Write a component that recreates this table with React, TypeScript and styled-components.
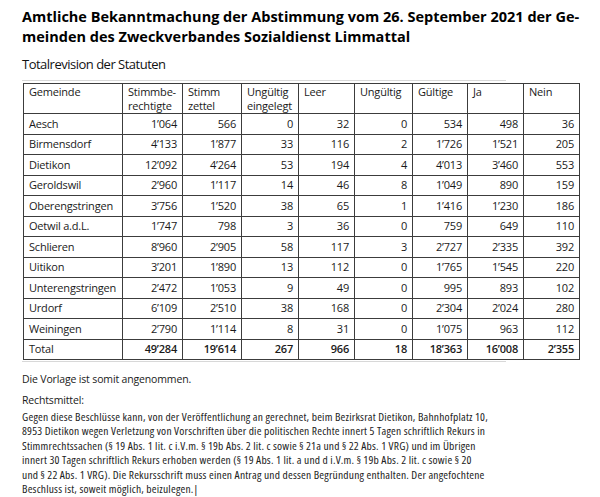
import styled, { createGlobalStyle } from "styled-components";

const GlobalStyle = createGlobalStyle`
  html, body {
    margin: 0;
    padding: 0;
    background: #ffffff;
  }
  body {
    font-family: "Open Sans", "Noto Sans", sans-serif;
    color: #1a1a1a;
  }
`;

interface Row {
  name: string;
  values: string[];
}

const columns = [
  "Gemeinde",
  "Stimmbe-\nrechtigte",
  "Stimm\nzettel",
  "Ungültig\neingelegt",
  "Leer",
  "Ungültig",
  "Gültige",
  "Ja",
  "Nein",
];

const widths = [99, 60, 59, 57, 56, 58, 55, 56, 56];

const rows: Row[] = [
  { name: "Aesch", values: ["1’064", "566", "0", "32", "0", "534", "498", "36"] },
  { name: "Birmensdorf", values: ["4’133", "1’877", "33", "116", "2", "1’726", "1’521", "205"] },
  { name: "Dietikon", values: ["12’092", "4’264", "53", "194", "4", "4’013", "3’460", "553"] },
  { name: "Geroldswil", values: ["2’960", "1’117", "14", "46", "8", "1’049", "890", "159"] },
  { name: "Oberengstringen", values: ["3’756", "1’520", "38", "65", "1", "1’416", "1’230", "186"] },
  { name: "Oetwil a.d.L.", values: ["1’747", "798", "3", "36", "0", "759", "649", "110"] },
  { name: "Schlieren", values: ["8’960", "2’905", "58", "117", "3", "2’727", "2’335", "392"] },
  { name: "Uitikon", values: ["3’201", "1’890", "13", "112", "0", "1’765", "1’545", "220"] },
  { name: "Unterengstringen", values: ["2’472", "1’053", "9", "49", "0", "995", "893", "102"] },
  { name: "Urdorf", values: ["6’109", "2’510", "38", "168", "0", "2’304", "2’024", "280"] },
  { name: "Weiningen", values: ["2’790", "1’114", "8", "31", "0", "1’075", "963", "112"] },
];

const total: Row = {
  name: "Total",
  values: ["49’284", "19’614", "267", "966", "18", "18’363", "16’008", "2’355"],
};

export default function App() {
  return (
    <Page>
      <GlobalStyle />
      <Title>
        Amtliche Bekanntmachung der Abstimmung vom 26. September 2021 der Ge-
        <br />
        meinden des Zweckverbandes Sozialdienst Limmattal
      </Title>
      <Subtitle>Totalrevision der Statuten</Subtitle>
      <Rule $top={7} />
      <Table>
        <colgroup>
          {widths.map((w, i) => (
            <col key={i} style={{ width: w }} />
          ))}
        </colgroup>
        <thead>
          <tr>
            {columns.map((c) => (
              <HeadCell key={c}>{c}</HeadCell>
            ))}
          </tr>
        </thead>
        <tbody>
          {rows.map((r) => (
            <tr key={r.name}>
              <NameCell>{r.name}</NameCell>
              {r.values.map((v, i) => (
                <NumCell key={i}>{v}</NumCell>
              ))}
            </tr>
          ))}
          <tr>
            <NameCell>{total.name}</NameCell>
            {total.values.map((v, i) => (
              <NumCell key={i} $bold>
                {v}
              </NumCell>
            ))}
          </tr>
        </tbody>
      </Table>
      <Rule $top={1} />
      <Text $top={10}>Die Vorlage ist somit angenommen.</Text>
      <Text $top={7}>Rechtsmittel:</Text>
      <Paragraph>
        Gegen diese Beschlüsse kann, von der Veröffentlichung an gerechnet, beim Bezirksrat Dietikon, Bahnhofplatz 10,
        <br />
        8953 Dietikon wegen Verletzung von Vorschriften über die politischen Rechte innert 5 Tagen schriftlich Rekurs in
        <br />
        Stimmrechtssachen (§ 19 Abs. 1 lit. c i.V.m. § 19b Abs. 2 lit. c sowie § 21a und § 22 Abs. 1 VRG) und im Übrigen
        <br />
        innert 30 Tagen schriftlich Rekurs erhoben werden (§ 19 Abs. 1 lit. a und d i.V.m. § 19b Abs. 2 lit. c sowie § 20
        <br />
        und § 22 Abs. 1 VRG). Die Rekursschrift muss einen Antrag und dessen Begründung enthalten. Der angefochtene
        <br />
        Beschluss ist, soweit möglich, beizulegen.|
      </Paragraph>
    </Page>
  );
}

const Page = styled.div`
  width: 600px;
  height: 497px;
  box-sizing: border-box;
  padding: 7px 0 0 22px;
  overflow: hidden;
`;

const Title = styled.h1`
  margin: 0;
  font-size: 14.5px;
  line-height: 19.5px;
  font-weight: 700;
  color: #000;
  white-space: nowrap;
`;

const Subtitle = styled.h2`
  margin: 9px 0 0;
  font-size: 13px;
  line-height: 18px;
  font-weight: 400;
  letter-spacing: -0.5px;
  color: #111;
`;

const Rule = styled.div<{ $top: number }>`
  width: 484px;
  height: 1px;
  background: #d8d8d8;
  margin: ${({ $top }) => $top}px 0 0;
`;

const Table = styled.table`
  border-collapse: collapse;
  table-layout: fixed;
  width: 556px;
  margin: 2px 0 0 1px;
  font-size: 11px;
  letter-spacing: -0.2px;
  color: #1a1a1a;
`;

const HeadCell = styled.th`
  border: 1px solid #3c3c3c;
  height: 28px;
  padding: 1px 5px 0;
  text-align: left;
  vertical-align: top;
  font-weight: 400;
  line-height: 13.5px;
  white-space: pre-line;
`;

const NameCell = styled.td`
  border: 1px solid #3c3c3c;
  height: 19.5px;
  padding: 0 5px;
  text-align: left;
  white-space: nowrap;
  line-height: 14px;
`;

const NumCell = styled.td<{ $bold?: boolean }>`
  border: 1px solid #3c3c3c;
  height: 19.5px;
  padding: 0 5px;
  text-align: right;
  white-space: nowrap;
  line-height: 14px;
  font-weight: ${({ $bold }) => ($bold ? 600 : 400)};
`;

const Text = styled.p<{ $top: number }>`
  margin: ${({ $top }) => $top}px 0 0;
  font-size: 10.5px;
  line-height: 14px;
  letter-spacing: -0.15px;
  color: #1a1a1a;
`;

const Paragraph = styled.p`
  margin: 3px 0 0;
  font-size: 11.5px;
  line-height: 14.4px;
  font-stretch: condensed;
  letter-spacing: 0.2px;
  color: #222;
  white-space: nowrap;
`;
